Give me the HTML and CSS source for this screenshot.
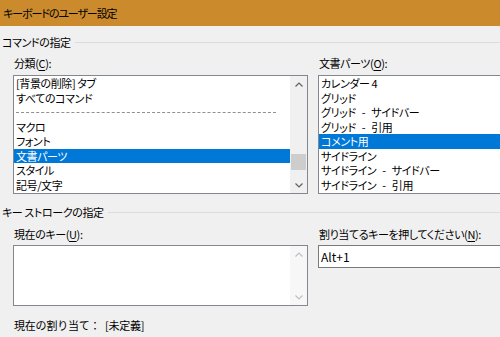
FILE: index.html
```html
<!DOCTYPE html>
<html lang="ja">
<head>
  <meta charset="UTF-8" />
  <title>キーボードのユーザー設定</title>
  <link rel="stylesheet" href="styles.css">
</head>
<body>

<div class="titlebar">キーボードのユーザー設定</div>

<div class="dialog">
  <div class="group-head"><span>コマンドの指定</span></div>

  <div class="columns top">
    <div class="col left">
      <div class="label">分類(<u>C</u>):</div>
      <div class="listbox">
        <ul class="items">
          <li>[背景の削除] タブ</li>
          <li>すべてのコマンド</li>
          <li class="sep"><span></span></li>
          <li>マクロ</li>
          <li>フォント</li>
          <li class="selected">文書パーツ</li>
          <li>スタイル</li>
          <li>記号/文字</li>
        </ul>
        <div class="scrollbar">
          <svg class="arrow" width="16" height="16" viewBox="0 0 16 16"><path d="M4.5 9.5 L8 6 L11.5 9.5" fill="none" stroke="#606060" stroke-width="1.2"/></svg>
          <div class="track"><div class="thumb"></div></div>
          <svg class="arrow" width="16" height="16" viewBox="0 0 16 16"><path d="M4.5 6.5 L8 10 L11.5 6.5" fill="none" stroke="#606060" stroke-width="1.2"/></svg>
        </div>
      </div>
    </div>
    <div class="col right">
      <div class="label">文書パーツ(<u>O</u>):</div>
      <div class="listbox">
        <ul class="items">
          <li>カレンダー 4</li>
          <li>グリッド</li>
          <li>グリッド<span class="dash">-</span>サイドバー</li>
          <li>グリッド<span class="dash">-</span>引用</li>
          <li class="selected">コメント用</li>
          <li>サイドライン</li>
          <li>サイドライン<span class="dash">-</span>サイドバー</li>
          <li>サイドライン<span class="dash">-</span>引用</li>
        </ul>
      </div>
    </div>
  </div>

  <div class="group-head second"><span>キー ストロークの指定</span></div>

  <div class="columns bottom">
    <div class="col left">
      <div class="label">現在のキー(<u>U</u>):</div>
      <div class="listbox keys">
        <ul class="items"></ul>
        <div class="scrollbar">
          <svg class="arrow" width="16" height="16" viewBox="0 0 16 16"><path d="M4.5 9.5 L8 6 L11.5 9.5" fill="none" stroke="#c0c0c0" stroke-width="1.2"/></svg>
          <div class="track"></div>
          <svg class="arrow" width="16" height="16" viewBox="0 0 16 16"><path d="M4.5 6.5 L8 10 L11.5 6.5" fill="none" stroke="#c0c0c0" stroke-width="1.2"/></svg>
        </div>
      </div>
    </div>
    <div class="col right">
      <div class="label">割り当てるキーを押してください(<u>N</u>):</div>
      <div class="textbox">Alt+1</div>
    </div>
  </div>

  <div class="assign">現在の割り当て：&nbsp;&nbsp;[未定義]</div>
</div>

</body>
</html>
```

FILE: styles.css
```css
* { box-sizing: border-box; }
html, body {
  margin: 0;
  padding: 0;
  width: 100%;
  height: 100%;
  overflow: hidden;
  background: #f0f0f0;
  color: #000;
  font-family: "Noto Sans CJK JP", "Noto Sans", sans-serif;
  font-size: 11px;
  letter-spacing: -0.4px;
  font-feature-settings: "palt";
}

.titlebar {
  height: 26px;
  line-height: 26px;
  padding-left: 3px;
  background: #cb8a2c;
  letter-spacing: -1.1px;
}

.dialog {
  padding-top: 8px;
}

.group-head {
  display: flex;
  align-items: center;
  height: 16px;
  line-height: 16px;
  padding-left: 2px;
}

.group-head.second { margin-top: 10px; }

.group-head::after {
  content: "";
  flex: 1;
  height: 1px;
  margin-left: 4px;
  background: #dcdcdc;
}

.columns {
  display: flex;
  gap: 10px;
  padding-left: 13px;
}

.columns.top { margin-top: 5px; }
.columns.bottom { margin-top: 6px; }

.col.left { width: 295px; flex-shrink: 0; }
.col.right { width: 240px; flex-shrink: 0; }

.label {
  height: 16px;
  line-height: 16px;
  margin-left: 1px;
  margin-bottom: 3px;
  white-space: nowrap;
}

.columns.top .label { margin-bottom: 4px; }

.label u { text-underline-offset: 2px; }

.listbox {
  display: flex;
  height: 119px;
  background: #fff;
  border: 1px solid #828790;
}

.items {
  flex: 1;
  list-style: none;
  margin: 0;
  padding: 0;
}

.items li {
  height: 14.5px;
  line-height: 14.5px;
  padding-left: 2px;
  white-space: nowrap;
}

.items li.selected {
  background: #0078d7;
  color: #fff;
}

.items .dash {
  margin: 0 6px;
}

.items li.sep {
  display: flex;
  align-items: center;
}

.items li.sep span {
  width: 260px;
  border-top: 1px dashed #909090;
}

.scrollbar {
  display: flex;
  flex-direction: column;
  width: 17px;
  background: #f0f0f0;
}

.scrollbar .arrow {
  display: block;
  margin: 1px 0 0 1px;
}

.scrollbar .track {
  flex: 1;
  display: flex;
  flex-direction: column;
  justify-content: flex-end;
  padding: 0 1px 6px 1px;
}

.scrollbar .thumb {
  height: 16px;
  background: #cdcdcd;
}

.listbox.keys {
  height: 61px;
}

.listbox.keys .scrollbar {
  background: #f7f7f7;
}

.textbox {
  height: 23px;
  line-height: 21px;
  padding-left: 2px;
  background: #fff;
  border: 1px solid #7a7a7a;
  font-size: 12px;
  letter-spacing: 0;
}

.assign {
  margin-top: 11px;
  padding-left: 14px;
  height: 16px;
  line-height: 16px;
  font-feature-settings: normal;
  letter-spacing: -0.2px;
}
```
